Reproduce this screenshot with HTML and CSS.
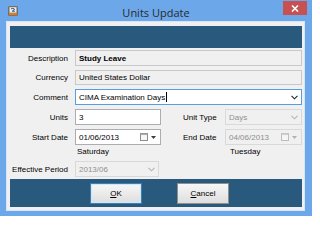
FILE: index.html
```html
<!DOCTYPE html>
<html>
<head>
<meta charset="utf-8">
<link rel="stylesheet" href="styles.css">
</head>
<body>
<div class="window">
  <div class="titlebar">
    <div class="tb-left">
      <svg class="app-icon" width="10" height="10" viewBox="0 0 10 10">
        <rect x="0" y="0" width="10" height="10" rx="1.5" fill="#6f6f6f"/>
        <rect x="1.5" y="1.2" width="7" height="5.5" fill="#ececec"/>
        <path d="M3 2.8 Q5 1.8 6.5 3 Q6.5 4.2 4.2 5.2 L7 5.2" fill="none" stroke="#3a5f8a" stroke-width="1"/>
        <rect x="1" y="7" width="8" height="2.2" fill="#e07b22"/>
      </svg>
    </div>
    <div class="title">Units Update</div>
    <div class="tb-right">
      <div class="close-btn">
        <svg width="8" height="7" viewBox="0 0 8 7"><path d="M1 0.5 L7 6.5 M7 0.5 L1 6.5" stroke="#fff" stroke-width="1.6"/></svg>
      </div>
    </div>
  </div>
  <div class="client">
    <div class="header-panel"></div>
    <div class="form">
      <div class="row r1">
        <span class="lbl">Description</span>
        <div class="field ro grow bold">Study Leave</div>
      </div>
      <div class="row r2">
        <span class="lbl">Currency</span>
        <div class="field ro grow">United States Dollar</div>
      </div>
      <div class="row r3">
        <span class="lbl">Comment</span>
        <div class="field focus grow">CIMA Examination Days<span class="caret"></span>
          <svg class="chev" width="7" height="5" viewBox="0 0 7 5"><polyline points="0.5,0.8 3.5,3.8 6.5,0.8" fill="none" stroke="#222" stroke-width="1.1"/></svg>
        </div>
      </div>
      <div class="row r4">
        <span class="lbl">Units</span>
        <div class="field short">3</div>
        <span class="lbl2">Unit Type</span>
        <div class="field disabled grow">Days
          <svg class="chev" width="7" height="5" viewBox="0 0 7 5"><polyline points="0.5,0.8 3.5,3.8 6.5,0.8" fill="none" stroke="#b5b5b5" stroke-width="1.1"/></svg>
        </div>
      </div>
      <div class="row r5">
        <span class="lbl">Start Date</span>
        <div class="field short">01/06/2013
          <svg class="cal" width="8" height="8" viewBox="0 0 8 8"><rect x="0.5" y="0.5" width="7" height="7" fill="#f7f7f7" stroke="#8c8c8c"/><rect x="0.5" y="0.5" width="7" height="1.5" fill="#a9a9a9"/></svg>
          <svg class="drop" width="5" height="3" viewBox="0 0 5 3"><polygon points="0,0 5,0 2.5,3" fill="#3c3c3c"/></svg>
        </div>
        <span class="lbl2">End Date</span>
        <div class="field disabled grow">04/06/2013
          <svg class="cal" width="8" height="8" viewBox="0 0 8 8"><rect x="0.5" y="0.5" width="7" height="7" fill="#f4f4f4" stroke="#bdbdbd"/><rect x="0.5" y="0.5" width="7" height="1.5" fill="#cfcfcf"/></svg>
          <svg class="drop" width="5" height="3" viewBox="0 0 5 3"><polygon points="0,0 5,0 2.5,3" fill="#b0b0b0"/></svg>
        </div>
      </div>
      <div class="row days">
        <span class="day1">Saturday</span>
        <span class="day2">Tuesday</span>
      </div>
      <div class="row r6">
        <span class="lbl">Effective Period</span>
        <div class="field disabled period">2013/06
          <svg class="chev" width="7" height="5" viewBox="0 0 7 5"><polyline points="0.5,0.8 3.5,3.8 6.5,0.8" fill="none" stroke="#b5b5b5" stroke-width="1.1"/></svg>
        </div>
      </div>
    </div>
    <div class="button-panel">
      <button class="btn default"><u>O</u>K</button>
      <button class="btn"><u>C</u>ancel</button>
    </div>
  </div>
</div>
</body>
</html>
```

FILE: styles.css
```css
* { box-sizing: border-box; }
html, body { margin: 0; padding: 0; }
body {
  width: 312px;
  height: 216px;
  overflow: hidden;
  font-family: "Liberation Sans", Arial, sans-serif;
  font-size: 8px;
  color: #000;
}
.window {
  width: 312px;
  height: 216px;
  background: #6ba7e9;
  display: flex;
  flex-direction: column;
}
.titlebar {
  height: 21px;
  display: grid;
  grid-template-columns: 1fr auto 1fr;
}
.tb-left { padding: 6px 0 0 8px; }
.app-icon { display: block; }
.title {
  font-family: "Open Sans", "Noto Sans", sans-serif;
  font-size: 11px;
  line-height: 21px;
  padding-top: 2px;
  color: #2a2a2a;
}
.tb-right { display: flex; justify-content: flex-end; padding: 1px 5px 0 0; }
.close-btn {
  width: 24px;
  height: 14px;
  background: #c75050;
  display: flex;
  align-items: center;
  justify-content: center;
}
.close-btn svg { display: block; }
.client {
  flex: 1;
  margin: 0 7px 5px 6px;
  border: 1px solid #d6e6f8;
  background: #f0f0f0;
  padding: 4px 2px 3px 3px;
  display: flex;
  flex-direction: column;
}
.header-panel {
  height: 22px;
  background: #29597c;
}
.form {
  flex: 1;
  display: flex;
  flex-direction: column;
}
.row {
  display: flex;
  align-items: center;
  margin-top: 4px;
  height: 16px;
}
.row.r1 { margin-top: 2px; }
.row.r2 { height: 15px; }
.lbl {
  width: 58px;
  margin-right: 7px;
  text-align: right;
  white-space: nowrap;
}
.lbl2 {
  width: 42px;
  margin-left: 22px;
  white-space: nowrap;
}
.field {
  height: 100%;
  border: 1px solid #abadb3;
  background: #fff;
  padding: 0 2px 0 3px;
  display: flex;
  align-items: center;
  white-space: nowrap;
}
.grow { flex: 1; }
.short { width: 86px; }
.period { width: 84px; }
.bold { font-weight: bold; }
.ro { background: #f0f0f0; border-color: #c9c9c9; }
.focus { border-color: #569de5; }
.disabled { background: #f0f0f0; border-color: #d9d9d9; color: #8f8f8f; }
.caret {
  display: inline-block;
  width: 1px;
  height: 10px;
  background: #000;
  margin-left: 1px;
}
.chev { margin-left: auto; margin-right: 1px; display: block; }
.cal { margin-left: auto; display: block; }
.drop { margin-left: 3px; margin-right: 2px; display: block; }
.row.days {
  margin-top: 0;
  height: 12px;
}
.day1 { margin-left: 67px; width: 153px; }
.button-panel {
  height: 28px;
  background: #29597c;
  display: flex;
  align-items: center;
  padding-left: 80px;
  gap: 35px;
}
.btn {
  width: 52px;
  height: 21px;
  margin-top: 1px;
  font-family: "Liberation Sans", Arial, sans-serif;
  font-size: 8px;
  color: #000;
  background: linear-gradient(#f7f7f7, #dedede);
  border: 1px solid #8f8f8f;
  padding: 0;
}
.btn.default { border-color: #3c7fb1; box-shadow: inset 0 0 0 1px #cfe6f8; }
```
